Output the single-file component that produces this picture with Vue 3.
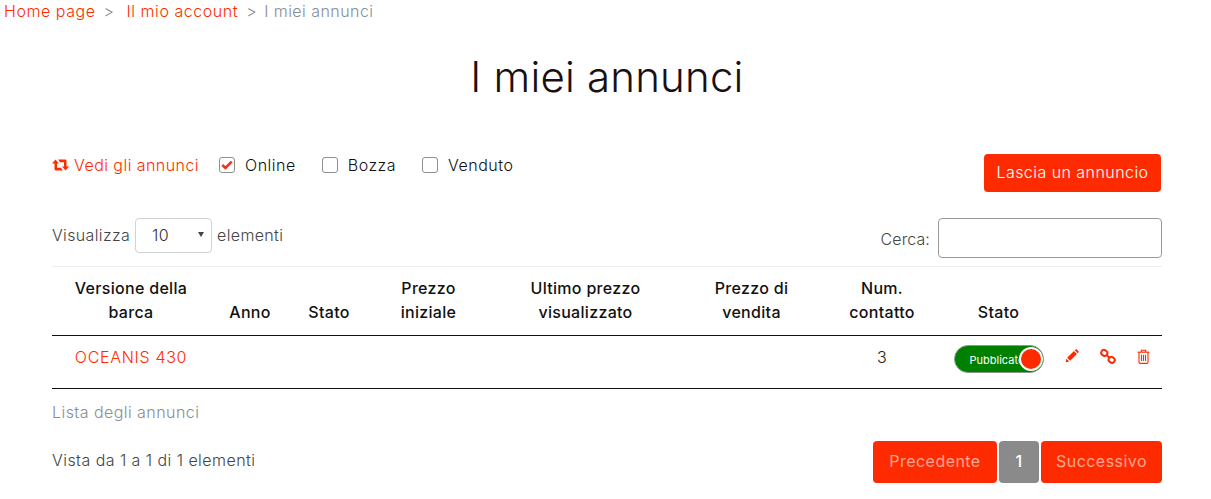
<script setup>
const columns = [
  { label: "Versione della barca", width: 158 },
  { label: "Anno", width: 80 },
  { label: "Stato", width: 78 },
  { label: "Prezzo iniziale", width: 121 },
  { label: "Ultimo prezzo visualizzato", width: 193 },
  { label: "Prezzo di vendita", width: 139 },
  { label: "Num. contatto", width: 122 },
  { label: "Stato", width: 111 },
  { label: "", width: 108 },
];
const filters = [
  { label: "Online", checked: true },
  { label: "Bozza", checked: false },
  { label: "Venduto", checked: false },
];
</script>

<template>
  <div class="page">
    <nav class="crumbs">
      <a href="#">Home page</a>
      <span class="sep first">&gt;</span>
      <a href="#">Il mio account</a>
      <span class="sep">&gt;</span>
      <span class="current">I miei annunci</span>
    </nav>

    <h1>I miei annunci</h1>

    <div class="toolbar">
      <div class="filters">
        <a href="#" class="see">
          <svg width="17" height="12" viewBox="0 0 17 12">
            <path d="M0 4.4 3.5 0.4 7 4.4H5V8.8H9L10.8 11.4H3.9A1.4 1.4 0 0 1 2.5 10V4.4Z" fill="#ff2b00" />
            <path d="M17 7.6 13.5 11.6 10 7.6H12V3.2H8L6.2 0.6H13.1A1.4 1.4 0 0 1 14.5 2V7.6Z" fill="#ff2b00" />
          </svg>
          Vedi gli annunci
        </a>
        <label v-for="f in filters" :key="f.label" class="check">
          <span class="box">
            <svg v-if="f.checked" width="12" height="10" viewBox="0 0 12 10">
              <path d="M1.3 5 4.5 8 10.7 1.7" fill="none" stroke="#e8391f" stroke-width="2.6" />
            </svg>
          </span>
          {{ f.label }}
        </label>
      </div>
      <a href="#" class="btn-add">Lascia un annuncio</a>
    </div>

    <div class="controls">
      <div class="length">
        Visualizza
        <span class="select">10<i class="arrow"></i></span>
        elementi
      </div>
      <div class="search">
        <span class="search-label">Cerca:</span>
        <span class="search-box"></span>
      </div>
    </div>

    <table>
      <colgroup>
        <col v-for="(c, i) in columns" :key="i" :style="{ width: c.width + 'px' }" />
      </colgroup>
      <thead>
        <tr>
          <th v-for="(c, i) in columns" :key="i">{{ c.label }}</th>
        </tr>
      </thead>
      <tbody>
        <tr>
          <td><a href="#" class="boat">OCEANIS 430</a></td>
          <td></td>
          <td></td>
          <td></td>
          <td></td>
          <td></td>
          <td>3</td>
          <td>
            <span class="toggle">
              <span class="toggle-text">Pubblicato</span>
              <span class="knob"></span>
            </span>
          </td>
          <td>
            <div class="actions">
              <svg width="14" height="14" viewBox="0 0 15 15">
                <path d="M0.7 14.3 1.5 10.4 4.6 13.5Z M2.3 9.5 9.6 2.2 12.8 5.4 5.5 12.7Z M10.4 1.4 11.3 0.6C11.7 0.2 12.3 0.2 12.7 0.6L14.4 2.3C14.8 2.7 14.8 3.3 14.4 3.7L13.6 4.6Z" fill="#ff2b00" />
              </svg>
              <svg width="16" height="15" viewBox="0 0 16 15">
                <g fill="none" stroke="#ff2b00" stroke-width="2">
                  <rect x="1.2" y="1.2" width="6.2" height="5.4" rx="2.6" transform="rotate(35 4.3 3.9)" />
                  <rect x="8.6" y="8.2" width="6.2" height="5.4" rx="2.6" transform="rotate(35 11.7 10.9)" />
                  <path d="M6 5.5 10 9.3" />
                </g>
              </svg>
              <svg width="13" height="15" viewBox="0 0 13 15">
                <g fill="none" stroke="#ff2b00" stroke-width="1.1">
                  <path d="M0.5 3.2H12.5" />
                  <path d="M4.3 3V1.2H8.7V3" />
                  <path d="M2 3.2V13.2C2 13.9 2.4 14.4 3 14.4H10C10.6 14.4 11 13.9 11 13.2V3.2" />
                  <path d="M4.5 5.8V12M6.5 5.8V12M8.5 5.8V12" />
                </g>
              </svg>
            </div>
          </td>
        </tr>
      </tbody>
    </table>

    <p class="caption">Lista degli annunci</p>

    <div class="footer">
      <div class="info">Vista da 1 a 1 di 1 elementi</div>
      <div class="pager">
        <a href="#" class="page-btn prev">Precedente</a>
        <a href="#" class="page-btn active">1</a>
        <a href="#" class="page-btn next">Successivo</a>
      </div>
    </div>
  </div>
</template>

<style>
html,
body {
  margin: 0;
  background: #fff;
}
</style>

<style scoped>
.page {
  width: 1211px;
  height: 499px;
  overflow: hidden;
  box-sizing: border-box;
  padding: 0 49px 0 52px;
  font-family: Inter, "Liberation Sans", sans-serif;
  font-size: 16px;
  font-weight: 350;
  letter-spacing: 0.45px;
  color: #212529;
}

a {
  color: #ff2b00;
  text-decoration: none;
}

.crumbs {
  margin-left: -48px;
  height: 23px;
  line-height: 23px;
  display: flex;
  color: #868e96;
  white-space: nowrap;
  letter-spacing: 0.55px;
}

.sep {
  margin: 0 7px 0 8px;
}

.sep.first {
  margin-right: 12px;
}

.current {
  color: #868e96;
  letter-spacing: 0.45px;
}

h1 {
  margin: 28px 0 0;
  height: 52px;
  line-height: 52px;
  text-align: center;
  font-size: 42px;
  font-weight: 300;
  letter-spacing: 0.2px;
  color: #1a1013;
}

.toolbar {
  margin-top: 51px;
  height: 38px;
  display: flex;
  justify-content: space-between;
  align-items: flex-start;
}

.filters {
  display: flex;
  align-items: center;
  height: 23px;
  margin-top: -1px;
}

.see {
  display: flex;
  align-items: center;
  gap: 5px;
  margin-right: 20px;
}

.check {
  display: flex;
  align-items: center;
  gap: 10px;
  margin-right: 26px;
  color: #111;
  letter-spacing: 0.5px;
}

.box {
  width: 14px;
  height: 14px;
  border: 1px solid #8f8f8f;
  border-radius: 3px;
  display: flex;
  align-items: center;
  justify-content: center;
}

.btn-add {
  width: 177px;
  height: 38px;
  line-height: 37px;
  margin-right: 1px;
  text-align: center;
  background: #ff2b00;
  color: #fff;
  border-radius: 4px;
}

.controls {
  margin-top: 26px;
  height: 48px;
  display: flex;
  justify-content: space-between;
  align-items: flex-start;
  color: #444;
}

.length {
  display: flex;
  align-items: center;
  gap: 5px;
  height: 34px;
  letter-spacing: 0.35px;
}

.select {
  position: relative;
  box-sizing: border-box;
  width: 77px;
  height: 35px;
  line-height: 33px;
  padding-left: 16px;
  border: 1px solid #ced4da;
  border-radius: 4px;
  color: #333;
}

.arrow {
  position: absolute;
  right: 7px;
  top: 13px;
  border-left: 3px solid transparent;
  border-right: 3px solid transparent;
  border-top: 5px solid #444;
}

.search {
  display: flex;
  align-items: center;
  gap: 8px;
  height: 40px;
}

.search-label {
  padding-top: 2px;
  letter-spacing: 0.1px;
}

.search-box {
  box-sizing: border-box;
  width: 224px;
  height: 40px;
  border: 1px solid #999;
  border-radius: 4px;
}

table {
  width: 1110px;
  table-layout: fixed;
  border-collapse: collapse;
  border-top: 1px solid #eee;
}

th {
  height: 69px;
  padding: 9px 10px 11px;
  box-sizing: border-box;
  text-align: center;
  vertical-align: bottom;
  font-weight: 500;
  letter-spacing: 0.3px;
  line-height: 24px;
  color: #111;
  border-bottom: 1px solid #111;
}

td {
  height: 53px;
  padding: 9px 0 0;
  box-sizing: border-box;
  text-align: center;
  vertical-align: top;
  line-height: 24px;
  color: #222;
  border-bottom: 1px solid #111;
}

.boat {
  letter-spacing: 0.7px;
}

.toggle {
  position: relative;
  display: block;
  box-sizing: border-box;
  width: 90px;
  height: 28px;
  margin: 0 auto;
  background: #008000;
  border: 1px solid #8a9a8a;
  border-radius: 14px;
  overflow: hidden;
}

.toggle-text {
  position: absolute;
  left: 15px;
  top: 2px;
  color: #fff;
  font-size: 11px;
  font-weight: 400;
  letter-spacing: 0;
  white-space: nowrap;
}

.knob {
  position: absolute;
  right: 0;
  top: 1px;
  box-sizing: border-box;
  width: 24px;
  height: 24px;
  background: #ff2b00;
  border: 2px solid #fff;
  border-radius: 50%;
}

.actions {
  display: flex;
  align-items: center;
  gap: 21px;
  padding-left: 11px;
  height: 14px;
  margin-top: 4px;
}

.caption {
  margin: 11px 0 0;
  height: 24px;
  line-height: 24px;
  color: #868e96;
}

.footer {
  margin-top: 17px;
  display: flex;
  justify-content: space-between;
  align-items: flex-start;
}

.info {
  height: 42px;
  line-height: 38px;
  color: #444;
}

.pager {
  display: flex;
  gap: 2px;
}

.page-btn {
  height: 42px;
  line-height: 41px;
  text-align: center;
  font-weight: 400;
  background: #ff2b00;
  color: #ffa794;
  border-radius: 4px;
}

.prev {
  width: 124px;
}

.next {
  width: 121px;
}

.page-btn.active {
  width: 40px;
  background: #8a8a8a;
  color: #fff;
  font-weight: 500;
}
</style>
